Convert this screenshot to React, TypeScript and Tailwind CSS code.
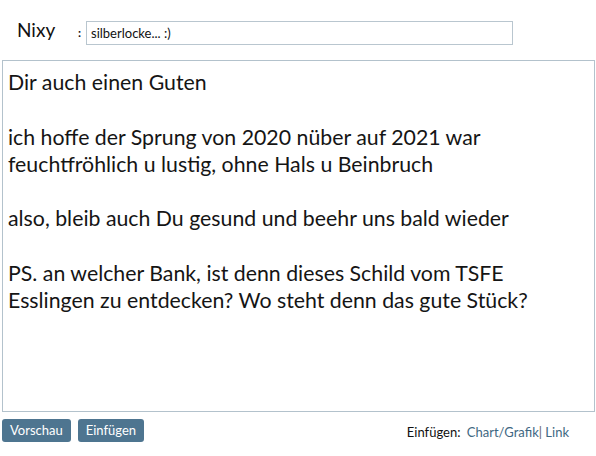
import React from 'react';

const text = `Dir auch einen Guten

ich hoffe der Sprung von 2020 nüber auf 2021 war
feuchtfröhlich u lustig, ohne Hals u Beinbruch

also, bleib auch Du gesund und beehr uns bald wieder

PS. an welcher Bank, ist denn dieses Schild vom TSFE
Esslingen zu entdecken? Wo steht denn das gute Stück?`;

const App: React.FC = () => {
  return (
    <div className="w-[596px] h-[456px] bg-white font-['Lato','Noto_Sans',sans-serif] text-[#111]">
      {/* Header: name + subject */}
      <div className="flex items-center h-[60px] pt-[5px]">
        <span className="w-[78px] pl-[17px] text-[19px] leading-none -mt-[6px]">Nixy</span>
        <span className="w-[8px] text-[12px] font-bold leading-none">:</span>
        <input
          defaultValue="silberlocke... :)"
          className="w-[427px] h-[24px] border border-[#b9c6cf] px-[4px] text-[13px] outline-none"
        />
      </div>

      {/* Message body */}
      <textarea
        defaultValue={text}
        className="block mx-[2px] w-[593px] h-[352px] border border-[#b3c2cc] pl-[5px] pr-[6px] pt-[8px] text-[21.3px] leading-[27.3px] text-[#151515] resize-none outline-none overflow-hidden"
      />

      {/* Footer */}
      <div className="flex items-center justify-between pt-[7px] pl-[2px] pr-[27px]">
        <div className="flex gap-[7px]">
          <button className="h-[23px] px-[8px] rounded-[3px] bg-[#4e7590] text-white text-[13px]">Vorschau</button>
          <button className="h-[23px] px-[8px] rounded-[3px] bg-[#4e7590] text-white text-[13px]">Einfügen</button>
        </div>
        <div className="text-[13px] pt-[4px]">
          <span>Einfügen: </span>
          <a className="text-[#3e6782] ml-[3px]">Chart/Grafik</a>
          <span className="text-[#666]">| </span>
          <a className="text-[#3e6782]">Link</a>
        </div>
      </div>
    </div>
  );
};

export default App;
